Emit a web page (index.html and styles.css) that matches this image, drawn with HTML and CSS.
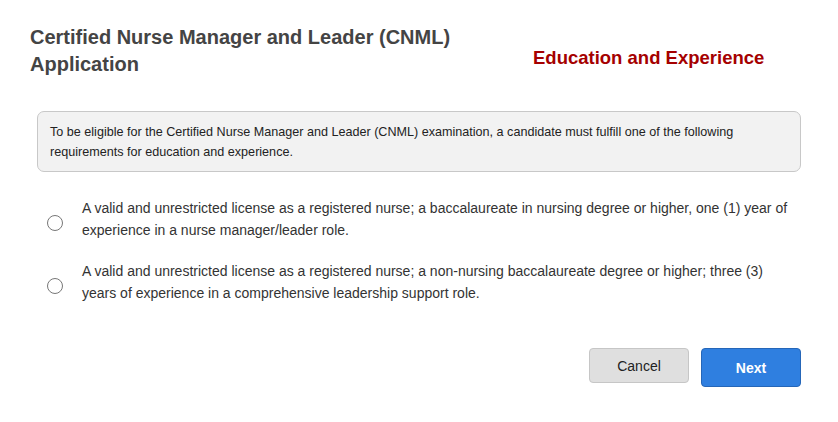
FILE: index.html
```html
<!DOCTYPE html>
<html>
	<head>
		<meta charset="UTF-8">
		<title>CNML Application</title>
		<link rel="stylesheet" href="styles.css">
	</head>
	<body>
		<div class="app">
			<div class="header">
				<h1 class="title">Certified Nurse Manager and Leader (CNML) Application</h1>
				<h2 class="section">Education and Experience</h2>
			</div>
			<div class="notice">
				<p>To be eligible for the Certified Nurse Manager and Leader (CNML) examination, a candidate must fulfill one of the following requirements for education and experience.</p>
			</div>
			<div class="options">
				<label class="option">
					<input type="radio" name="req" value="1">
					<span>A valid and unrestricted license as a registered nurse; a baccalaureate in nursing degree or higher, one (1) year of experience in a nurse manager/leader role.</span>
				</label>
				<label class="option">
					<input type="radio" name="req" value="2">
					<span>A valid and unrestricted license as a registered nurse; a non-nursing baccalaureate degree or higher; three (3) years of experience in a comprehensive leadership support role.</span>
				</label>
			</div>
			<div class="actions">
				<button class="btn cancel">Cancel</button>
				<button class="btn next">Next</button>
			</div>
		</div>
	</body>
</html>
```

FILE: styles.css
```css
body,p,h1,h2{
	margin: 0;
	padding: 0;
}
body{
	font-family: "Liberation Sans", Arial, sans-serif;
	color: #333;
	background: #fff;
}
.app{
	width: 771px;
	padding: 24px 0 0 30px;
}
.header{
	display: flex;
	align-items: flex-start;
}
.title{
	width: 470px;
	font-size: 20px;
	line-height: 27px;
	color: #444;
	font-weight: bold;
}
.section{
	margin: 22px 0 0 33px;
	font-size: 18.5px;
	line-height: 24px;
	color: #a50000;
	font-weight: bold;
}
.notice{
	margin: 33px 0 0 7px;
	padding: 10px 12px 9px 12px;
	background-color: #f2f2f2;
	border: 1px solid #c8c8c8;
	border-radius: 7px;
}
.notice p{
	font-size: 12.6px;
	line-height: 20px;
	color: #222;
}
.options{
	padding: 25px 0 0 17px;
}
.option{
	display: flex;
	align-items: center;
	margin-bottom: 19px;
	font-size: 14px;
	line-height: 22px;
	color: #333;
	cursor: pointer;
}
.option input{
	-webkit-appearance: none;
	appearance: none;
	width: 16px;
	height: 16px;
	margin: 8px 19px 0 0;
	flex: none;
	border: 1px solid #777;
	border-radius: 50%;
	background: #fff;
}
.actions{
	display: flex;
	justify-content: flex-end;
	align-items: flex-start;
	gap: 12px;
	margin-top: 44px;
}
.btn{
	width: 100px;
	font-family: "Liberation Sans", Arial, sans-serif;
	font-size: 14px;
	border-radius: 4px;
	cursor: pointer;
}
.cancel{
	height: 35px;
	background-color: #dfdfdf;
	border: 1px solid #c6c6c6;
	color: #222;
}
.next{
	height: 39px;
	background-color: #2f7fe0;
	border: 1px solid #2566b8;
	color: #fff;
	font-weight: bold;
}
```
